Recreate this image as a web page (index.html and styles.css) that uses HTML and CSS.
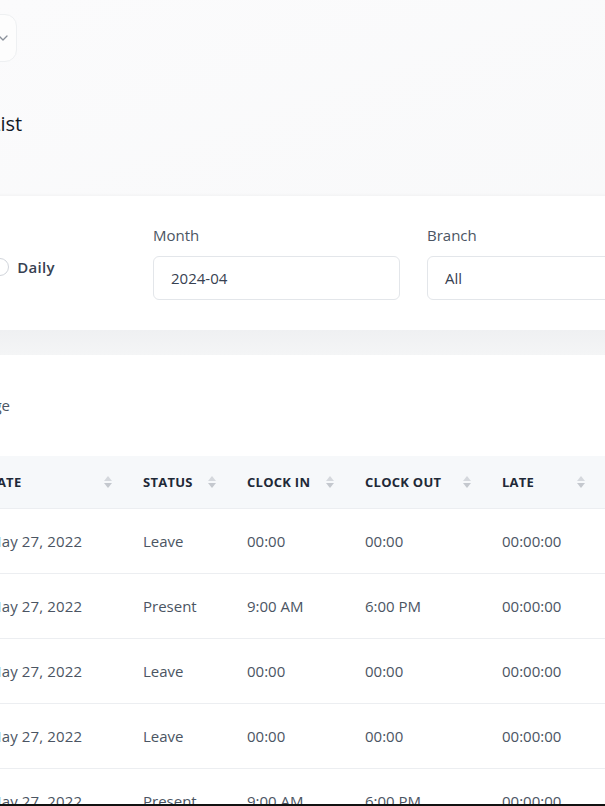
FILE: index.html
```html
<!DOCTYPE html>
<html lang="en">
<head>
<meta charset="utf-8">
<title>Attendance List</title>
<link rel="stylesheet" href="styles.css">
</head>
<body>
<div class="page">
  <header class="topbar">
    <button class="select-btn" type="button">
      <span class="select-text">All</span>
      <svg class="chev" width="10" height="6" viewBox="0 0 10 6"><path d="M1 1l4 4 4-4" fill="none" stroke="#8a909a" stroke-width="1.3" stroke-linecap="round" stroke-linejoin="round"/></svg>
    </button>
  </header>

  <h1 class="title">Attendance List</h1>

  <section class="card filters">
    <div class="radios">
      <label class="radio"><span class="dot checked"></span><span>Monthly</span></label>
      <label class="radio"><span class="dot"></span><span>Daily</span></label>
    </div>
    <div class="field">
      <div class="label">Month</div>
      <div class="input">2024-04</div>
    </div>
    <div class="field wide">
      <div class="label">Branch</div>
      <div class="input">All</div>
    </div>
  </section>

  <div class="band"></div>

  <section class="card list">
    <div class="perpage">Show 10 entries per page</div>
    <table class="grid">
      <colgroup>
        <col class="c-date"><col class="c-status"><col class="c-in"><col class="c-out"><col class="c-late"><col class="c-rest">
      </colgroup>
      <thead>
        <tr>
          <th><span class="th">DATE</span><span class="sort"></span></th>
          <th><span class="th">STATUS</span><span class="sort"></span></th>
          <th><span class="th">CLOCK IN</span><span class="sort"></span></th>
          <th><span class="th">CLOCK OUT</span><span class="sort"></span></th>
          <th><span class="th">LATE</span><span class="sort"></span></th>
          <th><span class="th">EARLY LEAVING</span><span class="sort"></span></th>
        </tr>
      </thead>
      <tbody>
        <tr><td>May 27, 2022</td><td>Leave</td><td>00:00</td><td>00:00</td><td>00:00:00</td><td>00:00:00</td></tr>
        <tr><td>May 27, 2022</td><td>Present</td><td>9:00 AM</td><td>6:00 PM</td><td>00:00:00</td><td>00:00:00</td></tr>
        <tr><td>May 27, 2022</td><td>Leave</td><td>00:00</td><td>00:00</td><td>00:00:00</td><td>00:00:00</td></tr>
        <tr><td>May 27, 2022</td><td>Leave</td><td>00:00</td><td>00:00</td><td>00:00:00</td><td>00:00:00</td></tr>
        <tr><td>May 27, 2022</td><td>Present</td><td>9:00 AM</td><td>6:00 PM</td><td>00:00:00</td><td>00:00:00</td></tr>
      </tbody>
    </table>
  </section>
</div>
<div class="edge"></div>
</body>
</html>
```

FILE: styles.css
```css
html, body {
  margin: 0;
  padding: 0;
}
body {
  width: 605px;
  height: 806px;
  overflow: hidden;
  background: linear-gradient(160deg, #fbfbfc 0%, #f5f6f7 100%);
  font-family: "Open Sans", "Noto Sans", sans-serif;
  color: #374151;
}
.page {
  margin-left: -200px;
  width: 1000px;
}
.topbar {
  height: 76px;
  padding-top: 14px;
  box-sizing: border-box;
  display: flex;
}
.select-btn {
  margin-left: 137px;
  width: 80px;
  height: 48px;
  border: 1px solid #eef0f2;
  border-radius: 12px;
  background: #fdfdfd;
  display: flex;
  align-items: center;
  justify-content: space-between;
  padding: 0 8px 0 16px;
  box-sizing: border-box;
  font-family: inherit;
  font-size: 14px;
  color: #374151;
}
.title {
  margin: 0 0 0 78px;
  height: 120px;
  padding-top: 34px;
  box-sizing: border-box;
  font-size: 20px;
  font-weight: 500;
  line-height: 28px;
  color: #111827;
}
.card {
  background: #ffffff;
}
.filters {
  height: 134px;
  box-sizing: border-box;
  padding: 30px 0 0 0;
  display: flex;
  align-items: flex-start;
  box-shadow: 0 -1px 3px rgba(0,0,0,0.03);
}
.radios {
  display: flex;
  gap: 28px;
  margin-left: 75px;
  margin-top: 31px;
  width: 278px;
}
.radio {
  display: flex;
  align-items: center;
  gap: 8px;
  font-size: 15px;
  font-weight: 600;
  color: #374151;
  line-height: 20px;
  letter-spacing: 0.02em;
}
.dot {
  width: 18px;
  height: 18px;
  border: 1px solid #d1d5db;
  border-radius: 50%;
  box-sizing: border-box;
}
.dot.checked {
  border: 5px solid #4f46e5;
}
.field {
  width: 247px;
  margin-right: 27px;
}
.field.wide {
  width: 300px;
}
.label {
  font-size: 15px;
  line-height: 20px;
  color: #4b5563;
  margin-top: -1px;
  margin-bottom: 11px;
}
.input {
  height: 44px;
  border: 1px solid #e3e6ea;
  border-radius: 6px;
  box-sizing: border-box;
  padding: 0 17px;
  display: flex;
  align-items: center;
  font-size: 15px;
  color: #374151;
}
.band {
  height: 25px;
  background: linear-gradient(180deg, #eff0f2, #f4f5f6);
}
.list {
  padding-top: 40px;
}
.perpage {
  margin-left: 27px;
  font-size: 15px;
  line-height: 20px;
  color: #4b5563;
  height: 20px;
  margin-bottom: 41px;
  width: 183px;
  overflow: hidden;
  white-space: nowrap;
  text-align: right;
  direction: rtl;
}
.grid {
  margin-left: 169px;
  border-collapse: collapse;
  table-layout: fixed;
  width: 763px;
}
.c-date { width: 158px; }
.c-status { width: 104px; }
.c-in { width: 118px; }
.c-out { width: 137px; }
.c-late { width: 114px; }
.c-rest { width: 132px; }
thead th {
  background: #f6f8fa;
  height: 52px;
  padding: 0 16px;
  text-align: left;
  position: relative;
  font-size: 13px;
  font-weight: 700;
  color: #1f2937;
  letter-spacing: 0.02em;
  white-space: nowrap;
}
thead th:first-child {
  padding-left: 18px;
}
.sort {
  position: absolute;
  right: 15px;
  top: 50%;
  margin-top: -7px;
  width: 8px;
  height: 14px;
}
.sort::before, .sort::after {
  content: "";
  position: absolute;
  left: 0;
  border-left: 4px solid transparent;
  border-right: 4px solid transparent;
}
.sort::before {
  top: 1px;
  border-bottom: 5px solid #d5d8dd;
}
.sort::after {
  bottom: 1px;
  border-top: 5px solid #c4c8ce;
}
tbody td {
  height: 64px;
  border-top: 1px solid #eceef1;
  padding: 0 16px;
  font-size: 15px;
  color: #4b5563;
  white-space: nowrap;
}
tbody td:first-child {
  padding-left: 19px;
  letter-spacing: 0.01em;
}
.edge {
  position: fixed;
  left: 0;
  right: 0;
  bottom: 0;
  height: 2px;
  background: #111;
}
```
